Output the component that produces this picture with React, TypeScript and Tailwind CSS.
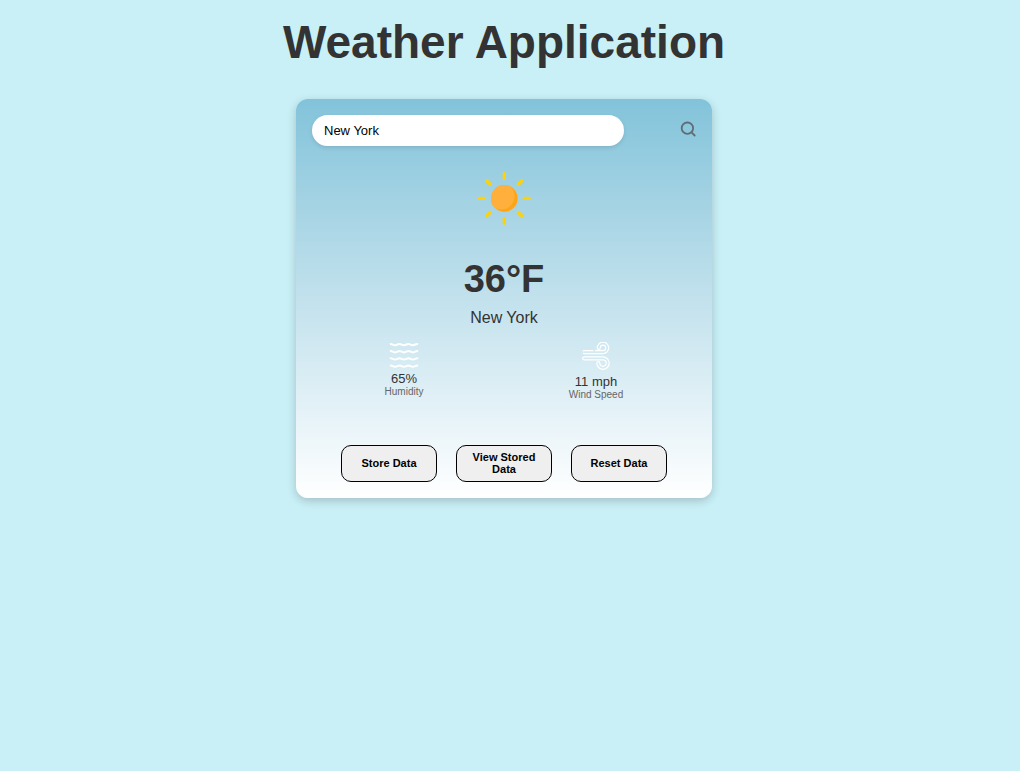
import { useState } from 'react';
import type { ReactNode } from 'react';

const rays = [0, 45, 90, 135, 180, 225, 270, 315];

const windPath = 'M4.2 10.1H23a4.2 4.2 0 1 0-4.2-4.2M4.2 16.4H23a4.7 4.7 0 1 1-4.7 4.7';

function SunIcon() {
  return (
    <svg viewBox="0 0 80 80" className="size-20" role="img" aria-label="Sunny">
      <clipPath id="sun-disc">
        <circle cx="40.3" cy="38.4" r="13.3" />
      </clipPath>
      {rays.map((angle) => (
        <line
          key={angle}
          x1="40.3"
          y1="13.6"
          x2="40.3"
          y2="18.4"
          stroke="#fdd20a"
          strokeWidth="3.3"
          strokeLinecap="round"
          transform={`rotate(${angle} 40.3 38.4)`}
        />
      ))}
      <circle cx="40.3" cy="38.4" r="13.3" fill="#ffa412" />
      <circle cx="37.2" cy="36.2" r="13.3" fill="#ffb03c" clipPath="url(#sun-disc)" />
    </svg>
  );
}

function HumidityIcon() {
  return (
    <svg
      viewBox="0 0 32 29"
      className="h-[29px] w-8"
      fill="none"
      stroke="white"
      strokeWidth="2"
      strokeLinecap="round"
      aria-hidden="true"
    >
      {[1.9, 9.1, 16.3, 23.5].map((y) => (
        <path
          key={y}
          d={`M2.7 ${y}c1.7 0 2.5 1.3 4.4 1.3s2.8-1.3 4.5-1.3s2.5 1.3 4.4 1.3s2.8-1.3 4.5-1.3s2.5 1.3 4.4 1.3s2.8-1.3 4.5-1.3`}
        />
      ))}
    </svg>
  );
}

function WindIcon() {
  return (
    <svg viewBox="0 0 32 32" className="size-8" fill="none" strokeLinecap="round" aria-hidden="true">
      <mask id="wind-outline" maskUnits="userSpaceOnUse" x="0" y="0" width="32" height="32">
        <path d={windPath} stroke="white" strokeWidth="4.2" />
        <path d={windPath} stroke="black" strokeWidth="1.8" />
        <rect x="13.5" y="7.5" width="1.5" height="2" fill="black" />
        <rect x="1.5" y="9.2" width="2" height="1.8" fill="black" />
      </mask>
      <rect width="32" height="32" fill="white" mask="url(#wind-outline)" />
    </svg>
  );
}

function SearchIcon() {
  return (
    <svg
      viewBox="0 0 16 16"
      className="size-4"
      fill="none"
      stroke="#5f6d73"
      strokeWidth="1.8"
      strokeLinecap="round"
      aria-hidden="true"
    >
      <circle cx="7.4" cy="7.2" r="5.7" />
      <path d="M11.5 11.3l3.2 3.2" />
    </svg>
  );
}

function Detail({ icon, value, label }: { icon: ReactNode; value: string; label: string }) {
  return (
    <div className="flex flex-1 flex-col items-center pr-2">
      {icon}
      <p className="text-[13px] leading-[15px] text-[#333]">{value}</p>
      <p className="text-[10px] leading-3 text-[#666]">{label}</p>
    </div>
  );
}

function ActionButton({ children }: { children: ReactNode }) {
  return (
    <button
      type="button"
      className="min-h-[37px] w-24 rounded-[10px] border border-black bg-[#efefef] px-2 pt-1 pb-1.5 text-[11px] leading-3 font-bold text-black"
    >
      {children}
    </button>
  );
}

export default function App() {
  const [city, setCity] = useState('New York');

  return (
    <main className="flex min-h-screen flex-col items-center bg-[#c9f0f7] pt-4 pr-3 font-['Liberation_Sans',Arial,sans-serif]">
      <h1 className="text-[46px] leading-[52px] font-bold text-[#333]">Weather Application</h1>

      <section className="mt-[31px] w-full max-w-[416px] rounded-xl bg-linear-to-b from-[#82c3da] to-white p-4 shadow-[0_3px_10px_rgba(0,0,0,0.2)]">
        <form className="flex items-start justify-between" onSubmit={(event) => event.preventDefault()}>
          <input
            type="text"
            aria-label="City"
            value={city}
            onChange={(event) => setCity(event.target.value)}
            className="h-[31px] w-[312px] rounded-full bg-white px-3 text-[13px] text-black shadow-[0_2px_4px_rgba(0,0,0,0.1)] outline-none"
          />
          <button type="submit" aria-label="Search" className="mt-1.5">
            <SearchIcon />
          </button>
        </form>

        <div className="mt-3.5 flex flex-col items-center">
          <SunIcon />
          <p className="mt-[17px] text-[38px] leading-[44px] font-bold text-[#333]">36°F</p>
          <p className="mt-2 text-base leading-[18px] text-[#333]">New York</p>
        </div>

        <div className="mt-[15px] flex items-start">
          <Detail icon={<HumidityIcon />} value="65%" label="Humidity" />
          <Detail icon={<WindIcon />} value="11 mph" label="Wind Speed" />
        </div>

        <div className="mt-11 flex justify-center gap-[19px]">
          <ActionButton>Store Data</ActionButton>
          <ActionButton>View Stored Data</ActionButton>
          <ActionButton>Reset Data</ActionButton>
        </div>
      </section>
    </main>
  );
}
